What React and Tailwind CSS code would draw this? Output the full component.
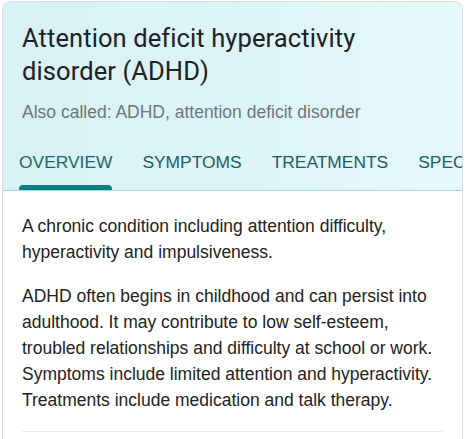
export default function App() {
    const tabs = ['OVERVIEW', 'SYMPTOMS', 'TREATMENTS', 'SPECIALISTS']

    return (
        <div className="w-[469px] h-[439px] overflow-hidden bg-white pl-[2px] pr-[6px] pt-[1px]">
            <div className="rounded-t-[8px] border border-[#dadce0] overflow-hidden h-[460px]">
                <div className="bg-gradient-to-r from-[#d7f1f4] to-[#e3f8fa] border-b border-[#a8d9de]">
                    <div className="px-[19px] pt-[20px]">
                        <h1 className="font-['Roboto',sans-serif] text-[25.5px] leading-[33px] text-[#202124] tracking-[0.1px]">
                            Attention deficit hyperactivity disorder (ADHD)
                        </h1>
                        <p className="mt-[13px] font-['Liberation_Sans',Arial,sans-serif] text-[17.5px] leading-[22px] text-[#70757a]">
                            Also called: ADHD, attention deficit disorder
                        </p>
                    </div>
                    <div className="mt-[28px] flex gap-[30px] px-[16px] overflow-hidden whitespace-nowrap font-['Liberation_Sans',Arial,sans-serif] text-[17.4px]">
                        {tabs.map((t, i) => (
                            <div key={t} className="flex flex-col items-stretch">
                                <span className={i === 0 ? 'text-[#1b666c] leading-[22px]' : 'text-[#1f5c61] leading-[22px]'}>{t}</span>
                                <div className={i === 0 ? 'mt-[12px] h-[5px] rounded-t-[4px] bg-[#0d8087]' : 'mt-[12px] h-[5px]'} />
                            </div>
                        ))}
                    </div>
                </div>
                <div className="px-[19px] pt-[22px] font-['Liberation_Sans',Arial,sans-serif] text-[17.5px] leading-[26px] text-[#222]">
                    <p>A chronic condition including attention difficulty, hyperactivity and impulsiveness.</p>
                    <p className="mt-[18px]">
                        ADHD often begins in childhood and can persist into adulthood. It may contribute to low self-esteem, troubled relationships and difficulty at school or work. Symptoms include limited attention and hyperactivity. Treatments include medication and talk therapy.
                    </p>
                    <div className="mt-[18px] border-t border-[#e8eaed]" />
                </div>
            </div>
        </div>
    )
}
